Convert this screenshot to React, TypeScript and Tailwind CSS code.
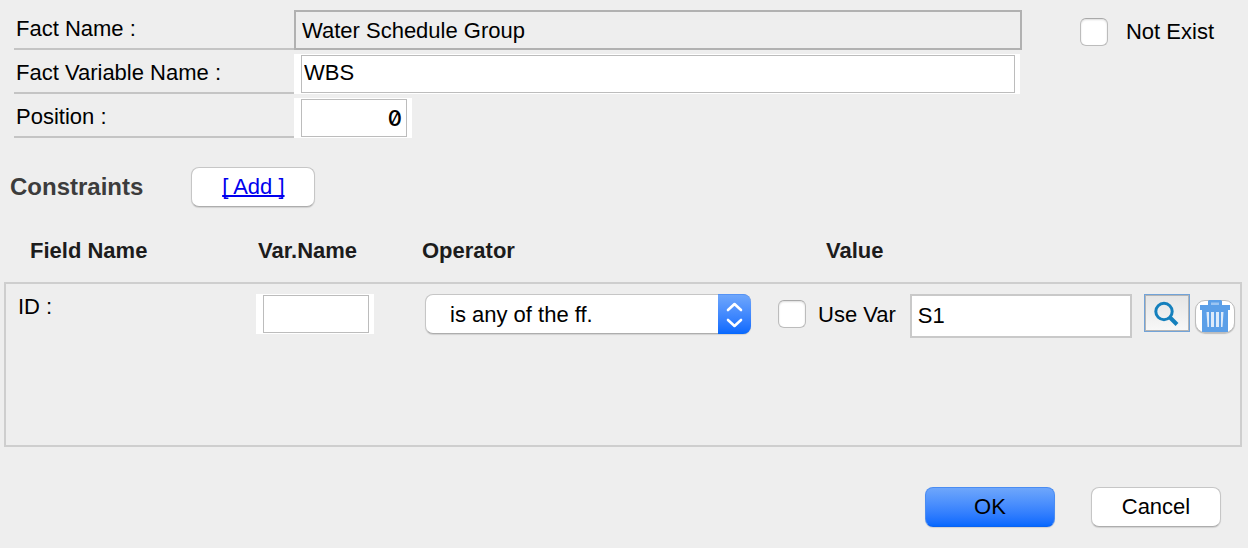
import { useState } from "react";
import type { ReactNode } from "react";

const pushButton =
  "flex h-10 items-center justify-center rounded-lg border border-[#c6c6c6] border-b-[#adadad] bg-white pb-0.5 shadow-[0_1px_1px_rgba(0,0,0,0.12)]";

function CheckBox({ id }: { id: string }) {
  return (
    <input
      id={id}
      type="checkbox"
      className="h-7 w-7 shrink-0 appearance-none rounded-md border border-[#bcbcbc] border-t-[#a9a9a9] bg-white shadow-[inset_0_1px_2px_rgba(0,0,0,0.14)] checked:bg-[#1a6dff]"
    />
  );
}

function FormRow({ id, label, children }: { id: string; label: string; children: ReactNode }) {
  return (
    <div className="flex h-10">
      <label
        htmlFor={id}
        className="w-[280px] shrink-0 border-b-2 border-[#c4c4c4] pl-0.5 leading-[38px]"
      >
        {label}
      </label>
      {children}
    </div>
  );
}

function OperatorSelect() {
  return (
    <div className="relative h-10 w-[326px]">
      <select
        aria-label="Operator"
        className="h-10 w-full appearance-none rounded-lg border border-[#c6c6c6] border-b-[#adadad] bg-white pr-10 pl-6 shadow-[0_1px_1px_rgba(0,0,0,0.12)]"
      >
        <option>is any of the ff.</option>
      </select>
      <span className="pointer-events-none absolute inset-y-0 right-0 flex w-[33px] items-center justify-center rounded-r-lg border-t border-[#5593f5] bg-linear-to-b from-[#6ea6fb] to-[#0468fe]">
        <svg viewBox="0 0 33 40" className="h-10 w-[33px]" fill="none" stroke="#fff" strokeWidth="2.6" strokeLinecap="round" strokeLinejoin="round">
          <path d="M10 15 16.500 9 23 15M10 25 16.500 31 23 25" />
        </svg>
      </span>
    </div>
  );
}

function SearchIcon() {
  return (
    <svg viewBox="0 0 26 26" className="h-[26px] w-[26px]" fill="none" stroke="#1580bd">
      <circle cx="10" cy="11.500" r="8.200" strokeWidth="3" />
      <path d="M16 17.500 23 24.500" strokeWidth="4" />
    </svg>
  );
}

function TrashIcon() {
  return (
    <svg viewBox="0 0 30 32" className="h-8 w-[30px]">
      <path fill="#5b9fe8" d="M9 0h12l1 1v4h8v5h-2v22H2V10H0V5h8V1z" />
      <path fill="#9cc5f2" d="M11 2.500h8V5h-8z" />
      <path fill="#dceafa" d="M6.500 12H9v15H7.500zM11 12h3v15h-3zM16 12h3v15h-3zM21 12h2.500l-1 15H21z" />
    </svg>
  );
}

export default function App() {
  const [variableName, setVariableName] = useState("WBS");
  const [position, setPosition] = useState("0");
  const [value, setValue] = useState("S1");

  return (
    <form
      onSubmit={(e) => e.preventDefault()}
      className="min-h-screen bg-[#eeeeee] pt-2.5 font-['Liberation_Sans',Arial,sans-serif] text-[22px] text-black"
    >
      <div className="flex items-start gap-[58px] pr-[34px] pl-3.5">
        <div className="flex min-w-0 flex-1 flex-col gap-1">
          <FormRow id="fact-name" label="Fact Name :">
            <input
              id="fact-name"
              readOnly
              value="Water Schedule Group"
              className="min-w-0 flex-1 border-2 border-[#b1b1b1] bg-[#eeeeee] px-1.5"
            />
          </FormRow>
          <FormRow id="variable-name" label="Fact Variable Name :">
            <div className="mr-0.5 flex min-w-0 flex-1 bg-white py-px pr-[5px] pl-[7px]">
              <input
                id="variable-name"
                value={variableName}
                onChange={(e) => setVariableName(e.target.value)}
                className="min-w-0 flex-1 border border-[#bcbcbc] bg-white px-0.5 pb-1"
              />
            </div>
          </FormRow>
          <FormRow id="position" label="Position :">
            <div className="flex w-[118px] bg-white py-px pr-[5px] pl-[7px]">
              <input
                id="position"
                value={position}
                onChange={(e) => setPosition(e.target.value)}
                className="w-full border border-[#bcbcbc] bg-white px-1 text-right font-['Inter',sans-serif] font-medium slashed-zero"
              />
            </div>
          </FormRow>
        </div>
        <div className="flex items-center gap-[18px] pt-2">
          <CheckBox id="not-exist" />
          <label htmlFor="not-exist" className="leading-7">
            Not Exist
          </label>
        </div>
      </div>

      <div className="mt-[29px] flex items-center gap-12 pl-2.5">
        <h2 className="text-2xl font-bold text-[#3c3c3c]">Constraints</h2>
        <button
          type="button"
          className={`${pushButton} w-[124px] text-[#0000ee] underline decoration-2 [text-decoration-skip-ink:none]`}
        >
          [ Add ]
        </button>
      </div>

      <div className="mt-6 pr-1.5 pl-1">
        <table className="w-full table-fixed border-collapse text-left">
          <colgroup>
            <col className="w-[251px]" />
            <col className="w-[166px]" />
            <col className="w-[352px]" />
            <col />
          </colgroup>
          <thead className="text-[#1c1c1c]">
            <tr className="h-[52px] align-top leading-10">
              <th className="pl-[25px]">Field Name</th>
              <th className="pl-0.5">Var.Name</th>
              <th>Operator</th>
              <th className="pl-[52px]">Value</th>
            </tr>
          </thead>
          <tbody className="border-2 border-[#cecece]">
            <tr className="h-[163px] align-top">
              <td className="pt-2.5 pl-3 leading-[26px]">ID :</td>
              <td className="pt-2.5">
                <div className="flex h-10 w-[118px] bg-white py-px pr-[5px] pl-[7px]">
                  <input
                    aria-label="Variable name"
                    className="w-full border border-[#bcbcbc] bg-white px-0.5"
                  />
                </div>
              </td>
              <td className="pt-2.5 pl-[3px]">
                <OperatorSelect />
              </td>
              <td className="pt-2.5 pr-[5px] pl-1">
                <div className="flex items-start">
                  <div className="flex h-10 items-center gap-3">
                    <CheckBox id="use-var" />
                    <label htmlFor="use-var">Use Var</label>
                  </div>
                  <input
                    aria-label="Value"
                    value={value}
                    onChange={(e) => setValue(e.target.value)}
                    className="ml-3.5 h-11 min-w-0 flex-1 border-2 border-[#c9c9c9] bg-white px-1.5"
                  />
                  <button
                    type="button"
                    aria-label="Search"
                    className="ml-3 flex h-[38px] w-[46px] items-center justify-center border border-[#72a3d8] bg-linear-to-b from-[#e5e5e5] to-[#f8f8f8] shadow-[inset_0_0_0_1px_#b5b5b5]"
                  >
                    <SearchIcon />
                  </button>
                  <button
                    type="button"
                    aria-label="Delete"
                    className="mt-1.5 ml-[5px] flex h-[33px] w-10 items-end justify-center rounded-[10px] border border-[#bdbdbd] bg-white shadow-[0_1px_1px_rgba(0,0,0,0.2)]"
                  >
                    <TrashIcon />
                  </button>
                </div>
              </td>
            </tr>
          </tbody>
        </table>
      </div>

      <div className="mt-10 flex justify-end gap-9 pr-[27px]">
        <button
          type="submit"
          className="flex h-10 w-[130px] items-center justify-center rounded-lg border border-[#4a8cf2] border-b-[#0a62f0] bg-linear-to-b from-[#6ea6fb] to-[#0468fe] pb-0.5 shadow-[0_1px_1px_rgba(0,0,0,0.12)]"
        >
          OK
        </button>
        <button type="button" className={`${pushButton} w-[130px]`}>
          Cancel
        </button>
      </div>
    </form>
  );
}
